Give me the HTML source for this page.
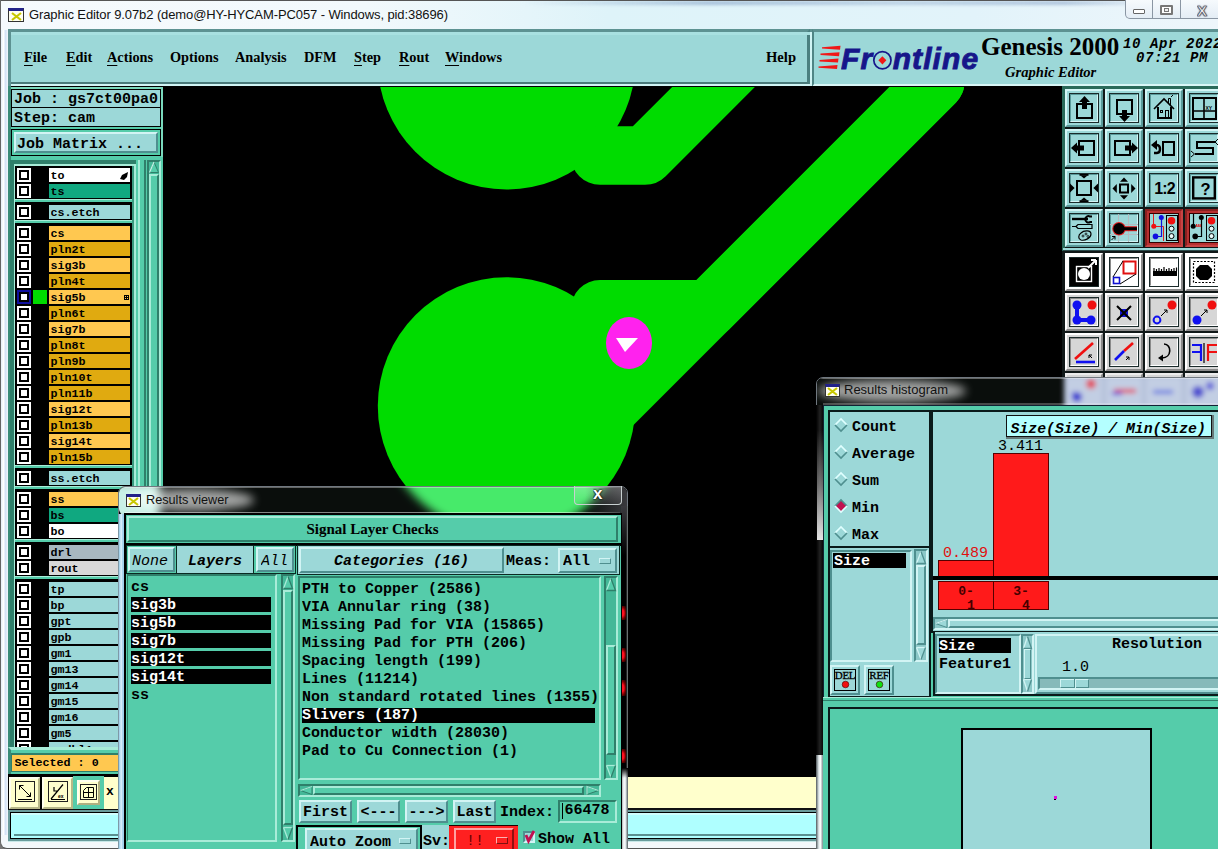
<!DOCTYPE html><html><head><meta charset="utf-8"><title>Graphic Editor</title><style>
html,body{margin:0;padding:0;}
body{width:1218px;height:849px;overflow:hidden;background:#eef4fa;position:relative;font-family:"Liberation Mono",monospace;}
div{position:absolute;box-sizing:border-box;white-space:pre;overflow:hidden;}
svg{position:absolute;overflow:visible;}
.m{font-family:"Liberation Mono",monospace;font-weight:bold;color:#000;}
.s{font-family:"Liberation Serif",serif;font-weight:bold;color:#000;}
.u{text-decoration:underline;text-underline-offset:3px;text-decoration-thickness:1.5px;}
.rc{border-style:solid;border-width:2px;border-color:#d2f4f4 #4f8f8f #4f8f8f #d2f4f4;background:#9cd8d8;}
.sc{border-style:solid;border-width:2px;border-color:#4f8f8f #d2f4f4 #d2f4f4 #4f8f8f;background:#9cd8d8;}
.rt{border-style:solid;border-width:2px;border-color:#a8ecd8 #2f7f6a #2f7f6a #a8ecd8;background:#55ccaa;}
.st{border-style:solid;border-width:2px;border-color:#2f7f6a #a8ecd8 #a8ecd8 #2f7f6a;background:#55ccaa;}
</style></head><body>
<div style="left:0px;top:0px;width:1218px;height:849px;background:#f2f7fb;"></div>
<div style="left:0px;top:0px;width:1218px;height:30px;background:linear-gradient(90deg,#f6fafd 0%,#f2f9fc 30%,#def3f9 50%,#e2f3fa 80%,#eef6fb 100%);"></div>
<div style="left:520px;top:1px;width:640px;height:4px;background:linear-gradient(90deg,rgba(120,150,190,0),rgba(120,150,190,.55) 30%,rgba(120,150,190,.35) 60%,rgba(120,150,190,.5) 85%,rgba(120,150,190,0));filter:blur(1.5px);"></div>
<div style="left:0px;top:0px;width:1218px;height:1px;background:#555;"></div>
<div style="left:1px;top:30px;width:7px;height:806px;background:linear-gradient(90deg,#e4eef8,#ffffff 35%,#d4e2f6 65%,#f2f7fc);"></div>
<div style="left:0px;top:0px;width:1px;height:849px;background:#666;"></div>
<div style="left:0px;top:839px;width:10px;height:10px;background:#777;"></div>
<div style="left:0px;top:835px;width:1218px;height:14px;background:#f4f8fb;border-bottom:1px solid #555;border-left:1px solid #666;border-radius:0 0 0 7px;"></div>
<div style="left:8px;top:8px;width:16px;height:14px;background:#fffff0;border:1px solid #333;border-top:3px solid #22228a;"></div>
<svg style="left:10.5px;top:11.5px" width="11" height="9"><path d="M1 1 L10 8 M10 1 L1 8" stroke="#c8c800" stroke-width="2.2" fill="none"/></svg>
<div style="left:29px;top:6px;width:600px;height:18px;font-family:'Liberation Sans',sans-serif;font-size:13px;color:#111;line-height:18px;letter-spacing:-0.1px;">Graphic Editor 9.07b2 (demo@HY-HYCAM-PC057 - Windows, pid:38696)</div>
<div style="left:1125px;top:0px;width:100px;height:19px;border:1px solid #8a96a3;border-top:none;border-radius:0 0 0 5px;background:linear-gradient(#f6fafd,#e4edf5);"></div>
<div style="left:1152px;top:0px;width:1px;height:18px;background:#8a96a3;"></div>
<div style="left:1180px;top:0px;width:1px;height:18px;background:#8a96a3;"></div>
<div style="left:1133px;top:9px;width:12px;height:5px;border:1px solid #666;background:#fff;border-radius:1px;"></div>
<div style="left:1160px;top:5px;width:13px;height:10px;border:2px solid #777;background:#fff;border-radius:1px;"></div>
<div style="left:1164px;top:8px;width:5px;height:4px;border:1px solid #777;background:#eee;"></div>
<div style="left:1197px;top:3px;width:20px;height:16px;font-family:'Liberation Sans',sans-serif;font-weight:bold;font-size:15px;color:#f4f4f4;-webkit-text-stroke:0.6px #556;text-shadow:0 0 1px #334,0 0 2px #334;line-height:16px;">X</div>
<div style="left:8px;top:29px;width:802px;height:55px;background:#9cd8d8;border-style:solid;border-width:3px 3px 2px 3px;border-color:#5d9292 #4a8080 #4a7a7a #5d9292;"></div>
<div style="left:8px;top:84px;width:806px;height:2px;background:#d0f4f4;"></div>
<div style="left:8px;top:29px;width:3px;height:57px;background:#5d9292;"></div>
<div style="left:11px;top:32px;width:800px;height:3px;background:#a8e0e0;"></div>
<div class="s" style="left:24px;top:48px;width:90px;height:18px;font-size:14.3px;line-height:18px;"><span class="u">F</span>ile</div>
<div class="s" style="left:66px;top:48px;width:90px;height:18px;font-size:14.3px;line-height:18px;"><span class="u">E</span>dit</div>
<div class="s" style="left:107px;top:48px;width:90px;height:18px;font-size:14.3px;line-height:18px;"><span class="u">A</span>ctions</div>
<div class="s" style="left:170px;top:48px;width:90px;height:18px;font-size:14.3px;line-height:18px;">Options</div>
<div class="s" style="left:235px;top:48px;width:90px;height:18px;font-size:14.3px;line-height:18px;">Analysis</div>
<div class="s" style="left:304px;top:48px;width:90px;height:18px;font-size:14.3px;line-height:18px;">DFM</div>
<div class="s" style="left:354px;top:48px;width:90px;height:18px;font-size:14.3px;line-height:18px;"><span class="u">S</span>tep</div>
<div class="s" style="left:399px;top:48px;width:90px;height:18px;font-size:14.3px;line-height:18px;"><span class="u">R</span>out</div>
<div class="s" style="left:445px;top:48px;width:90px;height:18px;font-size:14.3px;line-height:18px;"><span class="u">W</span>indows</div>
<div class="s" style="left:766px;top:48px;width:40px;height:18px;font-size:14.6px;line-height:18px;">Help</div>
<div style="left:810px;top:29px;width:3px;height:57px;background:#d0f4f4;border-top:3px solid #5d9292;"></div>
<div style="left:812px;top:29px;width:410px;height:58px;background:#9cd8d8;border-style:solid;border-width:3px 3px 3px 2px;border-color:#5d9292 #4a8080 #d8f6f6 #4f8585;"></div>
<svg style="left:818px;top:45px" width="24" height="24"><g fill="#f01818"><polygon points="4,2.2 22.5,0.8 22,4.8 4,3.6"/><polygon points="2.5,8.6 21.5,7.2 21,11.2 2.5,10"/><polygon points="1.5,15 20.5,13.6 20,17.6 1.5,16.4"/><polygon points="0.5,21.4 19.5,20 19,24 0.5,22.8"/></g></svg>
<div style="left:841px;top:40.5px;width:150px;height:36px;font-family:'Liberation Sans',sans-serif;font-weight:bold;font-style:italic;font-size:30px;line-height:36px;color:#16168a;letter-spacing:1.1px;-webkit-text-stroke:0.9px #16168a;">Fr<span style='color:transparent;-webkit-text-stroke:0 transparent'>o</span>ntline</div>
<svg style="left:871.5px;top:50px" width="21" height="21"><circle cx="10.4" cy="10.3" r="8.6" fill="none" stroke="#16168a" stroke-width="1.7"/><polygon points="10.4,6.2 14.4,10.3 10.4,14.4 6.4,10.3" fill="#f01818"/></svg>
<div class="s" style="left:981px;top:31.5px;width:140px;height:30px;font-size:25px;line-height:30px;">Genesis 2000</div>
<div class="s" style="left:1005px;top:63.2px;width:110px;height:18px;font-size:14.6px;font-style:italic;line-height:18px;">Graphic Editor</div>
<div class="m" style="left:1123px;top:35.5px;width:100px;height:16px;font-size:14px;font-style:italic;line-height:16px;letter-spacing:0.6px;">10 Apr 2022</div>
<div class="m" style="left:1136px;top:50px;width:100px;height:16px;font-size:14px;font-style:italic;line-height:16px;letter-spacing:0.6px;">07:21 PM</div>
<div style="left:163px;top:86px;width:900px;height:691px;background:#000;"></div>
<svg style="left:0;top:0" width="1218" height="849" viewBox="0 0 1218 849"><defs><clipPath id="gc"><rect x="163" y="87" width="899" height="690"/></clipPath></defs>
<g clip-path="url(#gc)" fill="#00dc00" stroke="#00dc00">
<circle cx="506.5" cy="60.5" r="129" stroke="none"/>
<circle cx="506.5" cy="406" r="128.7" stroke="none"/>
<polyline points="600,155.5 645,155.5 760,40.5" fill="none" stroke-width="58.5" stroke-linecap="round" stroke-linejoin="round"/>
<polyline points="600,309 708.5,309 935.5,82" fill="none" stroke-width="58" stroke-linecap="round" stroke-linejoin="round"/>
<polyline points="558.75,458.75 935.5,82" fill="none" stroke-width="58" stroke-linecap="round"/>
<ellipse cx="629" cy="343" rx="23" ry="26" fill="#ff22ee" stroke="none"/>
<polygon points="616,338 638,338 625,352" fill="#fff" stroke="none"/>
</g></svg>
<div style="left:117px;top:777px;width:1100px;height:31px;background:#ffffcc;"></div>
<div style="left:8px;top:808px;width:1215px;height:2px;background:#111;"></div>
<div style="left:8px;top:810px;width:1215px;height:32px;background:#6a9c9c;border-bottom:1px solid #c8e8e8;"></div>
<div style="left:10px;top:812px;width:1215px;height:27px;background:#afffff;border:1px solid #000;"></div>
<div style="left:11px;top:813px;width:1215px;height:2px;background:#d0ffff;"></div>
<div style="left:14px;top:834px;width:1215px;height:2px;background:#5a9090;"></div>
<div style="left:8px;top:86px;width:155px;height:692px;background:#55ccaa;border-top:1px solid #000;"></div>
<div style="left:11px;top:87px;width:152px;height:2px;background:#7ad8bc;"></div>
<div style="left:161px;top:87px;width:2px;height:70px;background:#7ad8bc;"></div>
<div style="left:8px;top:86px;width:3px;height:692px;background:#3a8c78;"></div>
<div style="left:11px;top:89px;width:150px;height:19px;background:#9cd8d8;border:1px solid #000;"></div>
<div class="m" style="left:14px;top:92px;width:150px;height:16px;font-size:15px;line-height:16px;">Job : gs7ct00pa0</div>
<div style="left:11px;top:107px;width:150px;height:20px;background:#9cd8d8;border:1px solid #000;"></div>
<div class="m" style="left:14px;top:111px;width:150px;height:16px;font-size:15px;line-height:16px;">Step: cam</div>
<div style="left:11px;top:129px;width:150px;height:27px;background:#55ccaa;border:1px solid #000;"></div>
<div class="rc" style="left:14px;top:132px;width:144px;height:21px;"></div>
<div class="m" style="left:17px;top:135.5px;width:140px;height:17px;font-size:15px;line-height:17px;">Job Matrix ...</div>
<div style="left:10px;top:160px;width:126px;height:590px;background:#2f7f6a;"></div>
<div style="left:14px;top:164px;width:122px;height:590px;background:#a8ecd8;"></div>
<div style="left:15px;top:166px;width:119px;height:590px;background:#3a9a80;"></div>
<div style="left:15px;top:166px;width:117px;height:590px;background:#000;"></div>
<div style="left:138px;top:160px;width:8px;height:590px;background:#55ccaa;border-left:2px solid #a8ecd8;border-right:2px solid #2f7f6a;"></div>
<div style="left:147px;top:160px;width:14px;height:590px;background:#44b898;border-style:solid;border-width:2px;border-color:#2f7f6a #a8ecd8 #a8ecd8 #2f7f6a;"></div>
<svg style="left:149px;top:161px" width="10" height="13"><polygon points="5,1 9.5,11.5 0.5,11.5" fill="#55ccaa" stroke="#2f7f6a" stroke-width="1"/><path d="M5 1 L0.5 11.5" stroke="#c8f4e8" stroke-width="1.2"/></svg>
<div style="left:149px;top:174px;width:10px;height:573px;background:#55ccaa;border-style:solid;border-width:2px;border-color:#a8ecd8 #2f7f6a #2f7f6a #a8ecd8;"></div>
<div style="left:17px;top:168px;width:14px;height:14px;background:#fff;"></div>
<div style="left:19px;top:170px;width:10px;height:10px;background:#fff;border:2px solid #000;"></div>
<div style="left:49px;top:168px;width:81px;height:14px;background:#ffffff;"></div>
<div class="m" style="left:50.5px;top:167.5px;width:80px;height:16px;font-size:11.7px;line-height:16px;letter-spacing:0px;">to</div>
<svg style="left:119px;top:171px" width="10" height="10"><path d="M9 1 L3 4 L1 8 L5 9 L8 6 Z" fill="#000"/></svg>
<div style="left:17px;top:184px;width:14px;height:14px;background:#fff;"></div>
<div style="left:19px;top:186px;width:10px;height:10px;background:#fff;border:2px solid #000;"></div>
<div style="left:49px;top:184px;width:81px;height:14px;background:#10a880;"></div>
<div class="m" style="left:50.5px;top:183.5px;width:80px;height:16px;font-size:11.7px;line-height:16px;letter-spacing:0px;">ts</div>
<div style="left:15px;top:199px;width:117px;height:3px;background:#55ccaa;border-top:1px solid #a8ecd8;"></div>
<div style="left:17px;top:205px;width:14px;height:14px;background:#fff;"></div>
<div style="left:19px;top:207px;width:10px;height:10px;background:#fff;border:2px solid #000;"></div>
<div style="left:49px;top:205px;width:81px;height:14px;background:#9cd8d8;"></div>
<div class="m" style="left:50.5px;top:204.5px;width:80px;height:16px;font-size:11.7px;line-height:16px;letter-spacing:0px;">cs.etch</div>
<div style="left:15px;top:220px;width:117px;height:3px;background:#55ccaa;border-top:1px solid #a8ecd8;"></div>
<div style="left:17px;top:226px;width:14px;height:14px;background:#fff;"></div>
<div style="left:19px;top:228px;width:10px;height:10px;background:#fff;border:2px solid #000;"></div>
<div style="left:49px;top:226px;width:81px;height:14px;background:#ffc850;"></div>
<div class="m" style="left:50.5px;top:225.5px;width:80px;height:16px;font-size:11.7px;line-height:16px;letter-spacing:0px;">cs</div>
<div style="left:17px;top:242px;width:14px;height:14px;background:#fff;"></div>
<div style="left:19px;top:244px;width:10px;height:10px;background:#fff;border:2px solid #000;"></div>
<div style="left:49px;top:242px;width:81px;height:14px;background:#e0aa10;"></div>
<div class="m" style="left:50.5px;top:241.5px;width:80px;height:16px;font-size:11.7px;line-height:16px;letter-spacing:0px;">pln2t</div>
<div style="left:17px;top:258px;width:14px;height:14px;background:#fff;"></div>
<div style="left:19px;top:260px;width:10px;height:10px;background:#fff;border:2px solid #000;"></div>
<div style="left:49px;top:258px;width:81px;height:14px;background:#ffc850;"></div>
<div class="m" style="left:50.5px;top:257.5px;width:80px;height:16px;font-size:11.7px;line-height:16px;letter-spacing:0px;">sig3b</div>
<div style="left:17px;top:274px;width:14px;height:14px;background:#fff;"></div>
<div style="left:19px;top:276px;width:10px;height:10px;background:#fff;border:2px solid #000;"></div>
<div style="left:49px;top:274px;width:81px;height:14px;background:#e0aa10;"></div>
<div class="m" style="left:50.5px;top:273.5px;width:80px;height:16px;font-size:11.7px;line-height:16px;letter-spacing:0px;">pln4t</div>
<div style="left:17px;top:290px;width:14px;height:14px;background:#1010a0;"></div>
<div style="left:19px;top:292px;width:10px;height:10px;background:#fff;border:2px solid #000;"></div>
<div style="left:33px;top:290px;width:14px;height:14px;background:#00dc00;"></div>
<div style="left:49px;top:290px;width:81px;height:14px;background:#ffc850;"></div>
<div class="m" style="left:50.5px;top:289.5px;width:80px;height:16px;font-size:11.7px;line-height:16px;letter-spacing:0px;">sig5b</div>
<svg style="left:124px;top:295px" width="6" height="6"><rect x="0.5" y="0.5" width="4" height="4" fill="none" stroke="#000"/><path d="M2.5 0.5V4.5M0.5 2.5H4.5" stroke="#000"/></svg>
<div style="left:17px;top:306px;width:14px;height:14px;background:#fff;"></div>
<div style="left:19px;top:308px;width:10px;height:10px;background:#fff;border:2px solid #000;"></div>
<div style="left:49px;top:306px;width:81px;height:14px;background:#e0aa10;"></div>
<div class="m" style="left:50.5px;top:305.5px;width:80px;height:16px;font-size:11.7px;line-height:16px;letter-spacing:0px;">pln6t</div>
<div style="left:17px;top:322px;width:14px;height:14px;background:#fff;"></div>
<div style="left:19px;top:324px;width:10px;height:10px;background:#fff;border:2px solid #000;"></div>
<div style="left:49px;top:322px;width:81px;height:14px;background:#ffc850;"></div>
<div class="m" style="left:50.5px;top:321.5px;width:80px;height:16px;font-size:11.7px;line-height:16px;letter-spacing:0px;">sig7b</div>
<div style="left:17px;top:338px;width:14px;height:14px;background:#fff;"></div>
<div style="left:19px;top:340px;width:10px;height:10px;background:#fff;border:2px solid #000;"></div>
<div style="left:49px;top:338px;width:81px;height:14px;background:#e0aa10;"></div>
<div class="m" style="left:50.5px;top:337.5px;width:80px;height:16px;font-size:11.7px;line-height:16px;letter-spacing:0px;">pln8t</div>
<div style="left:17px;top:354px;width:14px;height:14px;background:#fff;"></div>
<div style="left:19px;top:356px;width:10px;height:10px;background:#fff;border:2px solid #000;"></div>
<div style="left:49px;top:354px;width:81px;height:14px;background:#e0aa10;"></div>
<div class="m" style="left:50.5px;top:353.5px;width:80px;height:16px;font-size:11.7px;line-height:16px;letter-spacing:0px;">pln9b</div>
<div style="left:17px;top:370px;width:14px;height:14px;background:#fff;"></div>
<div style="left:19px;top:372px;width:10px;height:10px;background:#fff;border:2px solid #000;"></div>
<div style="left:49px;top:370px;width:81px;height:14px;background:#e0aa10;"></div>
<div class="m" style="left:50.5px;top:369.5px;width:80px;height:16px;font-size:11.7px;line-height:16px;letter-spacing:0px;">pln10t</div>
<div style="left:17px;top:386px;width:14px;height:14px;background:#fff;"></div>
<div style="left:19px;top:388px;width:10px;height:10px;background:#fff;border:2px solid #000;"></div>
<div style="left:49px;top:386px;width:81px;height:14px;background:#e0aa10;"></div>
<div class="m" style="left:50.5px;top:385.5px;width:80px;height:16px;font-size:11.7px;line-height:16px;letter-spacing:0px;">pln11b</div>
<div style="left:17px;top:402px;width:14px;height:14px;background:#fff;"></div>
<div style="left:19px;top:404px;width:10px;height:10px;background:#fff;border:2px solid #000;"></div>
<div style="left:49px;top:402px;width:81px;height:14px;background:#ffc850;"></div>
<div class="m" style="left:50.5px;top:401.5px;width:80px;height:16px;font-size:11.7px;line-height:16px;letter-spacing:0px;">sig12t</div>
<div style="left:17px;top:418px;width:14px;height:14px;background:#fff;"></div>
<div style="left:19px;top:420px;width:10px;height:10px;background:#fff;border:2px solid #000;"></div>
<div style="left:49px;top:418px;width:81px;height:14px;background:#e0aa10;"></div>
<div class="m" style="left:50.5px;top:417.5px;width:80px;height:16px;font-size:11.7px;line-height:16px;letter-spacing:0px;">pln13b</div>
<div style="left:17px;top:434px;width:14px;height:14px;background:#fff;"></div>
<div style="left:19px;top:436px;width:10px;height:10px;background:#fff;border:2px solid #000;"></div>
<div style="left:49px;top:434px;width:81px;height:14px;background:#ffc850;"></div>
<div class="m" style="left:50.5px;top:433.5px;width:80px;height:16px;font-size:11.7px;line-height:16px;letter-spacing:0px;">sig14t</div>
<div style="left:17px;top:450px;width:14px;height:14px;background:#fff;"></div>
<div style="left:19px;top:452px;width:10px;height:10px;background:#fff;border:2px solid #000;"></div>
<div style="left:49px;top:450px;width:81px;height:14px;background:#e0aa10;"></div>
<div class="m" style="left:50.5px;top:449.5px;width:80px;height:16px;font-size:11.7px;line-height:16px;letter-spacing:0px;">pln15b</div>
<div style="left:15px;top:465px;width:117px;height:3px;background:#55ccaa;border-top:1px solid #a8ecd8;"></div>
<div style="left:17px;top:471px;width:14px;height:14px;background:#fff;"></div>
<div style="left:19px;top:473px;width:10px;height:10px;background:#fff;border:2px solid #000;"></div>
<div style="left:49px;top:471px;width:81px;height:14px;background:#9cd8d8;"></div>
<div class="m" style="left:50.5px;top:470.5px;width:80px;height:16px;font-size:11.7px;line-height:16px;letter-spacing:0px;">ss.etch</div>
<div style="left:15px;top:486px;width:117px;height:3px;background:#55ccaa;border-top:1px solid #a8ecd8;"></div>
<div style="left:17px;top:492px;width:14px;height:14px;background:#fff;"></div>
<div style="left:19px;top:494px;width:10px;height:10px;background:#fff;border:2px solid #000;"></div>
<div style="left:49px;top:492px;width:81px;height:14px;background:#ffc850;"></div>
<div class="m" style="left:50.5px;top:491.5px;width:80px;height:16px;font-size:11.7px;line-height:16px;letter-spacing:0px;">ss</div>
<div style="left:17px;top:508px;width:14px;height:14px;background:#fff;"></div>
<div style="left:19px;top:510px;width:10px;height:10px;background:#fff;border:2px solid #000;"></div>
<div style="left:49px;top:508px;width:81px;height:14px;background:#10a880;"></div>
<div class="m" style="left:50.5px;top:507.5px;width:80px;height:16px;font-size:11.7px;line-height:16px;letter-spacing:0px;">bs</div>
<div style="left:17px;top:524px;width:14px;height:14px;background:#fff;"></div>
<div style="left:19px;top:526px;width:10px;height:10px;background:#fff;border:2px solid #000;"></div>
<div style="left:49px;top:524px;width:81px;height:14px;background:#ffffff;"></div>
<div class="m" style="left:50.5px;top:523.5px;width:80px;height:16px;font-size:11.7px;line-height:16px;letter-spacing:0px;">bo</div>
<div style="left:15px;top:539px;width:117px;height:3px;background:#55ccaa;border-top:1px solid #a8ecd8;"></div>
<div style="left:17px;top:545px;width:14px;height:14px;background:#fff;"></div>
<div style="left:19px;top:547px;width:10px;height:10px;background:#fff;border:2px solid #000;"></div>
<div style="left:49px;top:545px;width:81px;height:14px;background:#a8b8c0;"></div>
<div class="m" style="left:50.5px;top:544.5px;width:80px;height:16px;font-size:11.7px;line-height:16px;letter-spacing:0px;">drl</div>
<div style="left:17px;top:561px;width:14px;height:14px;background:#fff;"></div>
<div style="left:19px;top:563px;width:10px;height:10px;background:#fff;border:2px solid #000;"></div>
<div style="left:49px;top:561px;width:81px;height:14px;background:#d8d8d8;"></div>
<div class="m" style="left:50.5px;top:560.5px;width:80px;height:16px;font-size:11.7px;line-height:16px;letter-spacing:0px;">rout</div>
<div style="left:15px;top:576px;width:117px;height:3px;background:#55ccaa;border-top:1px solid #a8ecd8;"></div>
<div style="left:17px;top:582px;width:14px;height:14px;background:#fff;"></div>
<div style="left:19px;top:584px;width:10px;height:10px;background:#fff;border:2px solid #000;"></div>
<div style="left:49px;top:582px;width:81px;height:14px;background:#9cd8d8;"></div>
<div class="m" style="left:50.5px;top:581.5px;width:80px;height:16px;font-size:11.7px;line-height:16px;letter-spacing:0px;">tp</div>
<div style="left:17px;top:598px;width:14px;height:14px;background:#fff;"></div>
<div style="left:19px;top:600px;width:10px;height:10px;background:#fff;border:2px solid #000;"></div>
<div style="left:49px;top:598px;width:81px;height:14px;background:#9cd8d8;"></div>
<div class="m" style="left:50.5px;top:597.5px;width:80px;height:16px;font-size:11.7px;line-height:16px;letter-spacing:0px;">bp</div>
<div style="left:17px;top:614px;width:14px;height:14px;background:#fff;"></div>
<div style="left:19px;top:616px;width:10px;height:10px;background:#fff;border:2px solid #000;"></div>
<div style="left:49px;top:614px;width:81px;height:14px;background:#9cd8d8;"></div>
<div class="m" style="left:50.5px;top:613.5px;width:80px;height:16px;font-size:11.7px;line-height:16px;letter-spacing:0px;">gpt</div>
<div style="left:17px;top:630px;width:14px;height:14px;background:#fff;"></div>
<div style="left:19px;top:632px;width:10px;height:10px;background:#fff;border:2px solid #000;"></div>
<div style="left:49px;top:630px;width:81px;height:14px;background:#9cd8d8;"></div>
<div class="m" style="left:50.5px;top:629.5px;width:80px;height:16px;font-size:11.7px;line-height:16px;letter-spacing:0px;">gpb</div>
<div style="left:17px;top:646px;width:14px;height:14px;background:#fff;"></div>
<div style="left:19px;top:648px;width:10px;height:10px;background:#fff;border:2px solid #000;"></div>
<div style="left:49px;top:646px;width:81px;height:14px;background:#9cd8d8;"></div>
<div class="m" style="left:50.5px;top:645.5px;width:80px;height:16px;font-size:11.7px;line-height:16px;letter-spacing:0px;">gm1</div>
<div style="left:17px;top:662px;width:14px;height:14px;background:#fff;"></div>
<div style="left:19px;top:664px;width:10px;height:10px;background:#fff;border:2px solid #000;"></div>
<div style="left:49px;top:662px;width:81px;height:14px;background:#9cd8d8;"></div>
<div class="m" style="left:50.5px;top:661.5px;width:80px;height:16px;font-size:11.7px;line-height:16px;letter-spacing:0px;">gm13</div>
<div style="left:17px;top:678px;width:14px;height:14px;background:#fff;"></div>
<div style="left:19px;top:680px;width:10px;height:10px;background:#fff;border:2px solid #000;"></div>
<div style="left:49px;top:678px;width:81px;height:14px;background:#9cd8d8;"></div>
<div class="m" style="left:50.5px;top:677.5px;width:80px;height:16px;font-size:11.7px;line-height:16px;letter-spacing:0px;">gm14</div>
<div style="left:17px;top:694px;width:14px;height:14px;background:#fff;"></div>
<div style="left:19px;top:696px;width:10px;height:10px;background:#fff;border:2px solid #000;"></div>
<div style="left:49px;top:694px;width:81px;height:14px;background:#9cd8d8;"></div>
<div class="m" style="left:50.5px;top:693.5px;width:80px;height:16px;font-size:11.7px;line-height:16px;letter-spacing:0px;">gm15</div>
<div style="left:17px;top:710px;width:14px;height:14px;background:#fff;"></div>
<div style="left:19px;top:712px;width:10px;height:10px;background:#fff;border:2px solid #000;"></div>
<div style="left:49px;top:710px;width:81px;height:14px;background:#9cd8d8;"></div>
<div class="m" style="left:50.5px;top:709.5px;width:80px;height:16px;font-size:11.7px;line-height:16px;letter-spacing:0px;">gm16</div>
<div style="left:17px;top:726px;width:14px;height:14px;background:#fff;"></div>
<div style="left:19px;top:728px;width:10px;height:10px;background:#fff;border:2px solid #000;"></div>
<div style="left:49px;top:726px;width:81px;height:14px;background:#9cd8d8;"></div>
<div class="m" style="left:50.5px;top:725.5px;width:80px;height:16px;font-size:11.7px;line-height:16px;letter-spacing:0px;">gm5</div>
<div style="left:17px;top:742px;width:14px;height:14px;background:#fff;"></div>
<div style="left:19px;top:744px;width:10px;height:10px;background:#fff;border:2px solid #000;"></div>
<div style="left:49px;top:742px;width:81px;height:14px;background:#9cd8d8;"></div>
<div class="m" style="left:50.5px;top:741.5px;width:80px;height:16px;font-size:11.7px;line-height:16px;letter-spacing:0px;">gmdbl1</div>
<div style="left:8px;top:747px;width:110px;height:28px;background:#55ccaa;border-top:3px solid #a8ecd8;border-left:3px solid #3a8c78;"></div>
<div style="left:11px;top:753px;width:110px;height:19px;background:#ffc850;border:1px solid #2f7f6a;border-top:2px solid #2f7f6a;"></div>
<div class="m" style="left:14.5px;top:756px;width:110px;height:15px;font-size:11.7px;line-height:15px;">Selected : 0</div>
<div style="left:8px;top:774px;width:110px;height:35px;background:#000;"></div>
<div style="left:73px;top:776px;width:31px;height:33px;background:#55ccaa;"></div>
<div style="left:9px;top:777px;width:31px;height:32px;background:#ffffcc;border-style:solid;border-width:2px;border-color:#ffffee #b8b888 #b8b888 #ffffee;"></div>
<div style="left:15px;top:781px;width:20px;height:21px;background:#ffffcc;border:1px solid #222;"></div>
<div style="left:42px;top:777px;width:31px;height:32px;background:#ffffcc;border-style:solid;border-width:2px;border-color:#ffffee #b8b888 #b8b888 #ffffee;"></div>
<div style="left:48px;top:781px;width:20px;height:21px;background:#ffffcc;border:1px solid #222;"></div>
<div style="left:74px;top:777px;width:29px;height:32px;background:#55ccaa;"></div>
<div style="left:77px;top:780px;width:23px;height:25px;background:#ffffcc;border-style:solid;border-width:2px;border-color:#ffffee #b0b080 #b0b080 #ffffee;"></div>
<div style="left:80px;top:784px;width:17px;height:16px;background:#ffffcc;border:1px solid #222;"></div>
<div style="left:104px;top:777px;width:14px;height:32px;background:#ffffcc;"></div>
<div class="m" style="left:106px;top:783px;width:12px;height:18px;font-size:13px;line-height:18px;">x</div>
<svg style="left:15px;top:781px" width="20" height="21"><path d="M4.5 4.5 L15.5 15.5 M4.5 4.5 v4 M4.5 4.5 h4 M15.5 15.5 h-4 M15.5 15.5 v-4" stroke="#000" fill="none"/><path d="M3 18.5 H17" stroke="#000"/></svg>
<svg style="left:48px;top:781px" width="20" height="21"><path d="M3 18 L15 3.5 M3 18.5 H17 M6 6 v4 h3" stroke="#000" fill="none" stroke-width="1.2"/><text x="10" y="17" font-size="5" font-family="Liberation Sans,sans-serif" font-weight="bold">ex</text></svg>
<svg style="left:80px;top:784px" width="18" height="18"><path d="M3.5 6.5 L6.5 3.5 H13.5 V13.5 H3.5 Z M8.5 3.5 V13.5 M3.5 8.5 H13.5" fill="none" stroke="#000"/></svg>
<div style="left:1062px;top:86px;width:160px;height:292px;background:#101818;"></div>
<div style="left:1062px;top:86px;width:160px;height:3px;background:#2a6a5a;"></div>
<div style="left:1062px;top:86px;width:3px;height:165px;background:#2a6a5a;"></div>
<div style="left:1063px;top:248px;width:160px;height:3px;background:#9cd8d8;border-bottom:1px solid #2a4a4a;"></div>
<div style="left:1065px;top:89px;width:38px;height:38px;background:#9cd8d8;border-style:solid;border-width:2px;border-color:#d4f6f6 #5a9a9a #5a9a9a #d4f6f6;"></div>
<div style="left:1069px;top:93px;width:30px;height:30px;background:#9cd8d8;border-style:solid;border-width:1px;border-color:#1a2a2a #1a2a2a #1a2a2a #1a2a2a;"></div>
<div style="left:1070px;top:94px;width:28px;height:28px;background:#9cd8d8;border-style:solid;border-width:1px;border-color:#5a9a9a #d4f6f6 #d4f6f6 #5a9a9a;"></div>
<svg style="left:1070px;top:94px" width="28" height="28" viewBox="0 0 28 28"><rect x="7" y="10" width="15" height="14" stroke="#000" fill="none" stroke-width="2"/><path d="M14.5 15 V7" stroke="#000" stroke-width="5"/><polygon points="14.5,2 20,8 9,8" fill="#000"/></svg>
<div style="left:1105px;top:89px;width:38px;height:38px;background:#9cd8d8;border-style:solid;border-width:2px;border-color:#d4f6f6 #5a9a9a #5a9a9a #d4f6f6;"></div>
<div style="left:1109px;top:93px;width:30px;height:30px;background:#9cd8d8;border-style:solid;border-width:1px;border-color:#1a2a2a #1a2a2a #1a2a2a #1a2a2a;"></div>
<div style="left:1110px;top:94px;width:28px;height:28px;background:#9cd8d8;border-style:solid;border-width:1px;border-color:#5a9a9a #d4f6f6 #d4f6f6 #5a9a9a;"></div>
<svg style="left:1110px;top:94px" width="28" height="28" viewBox="0 0 28 28"><rect x="7" y="6" width="15" height="14" stroke="#000" fill="none" stroke-width="2"/><path d="M14.5 16 V24" stroke="#000" stroke-width="5"/><polygon points="14.5,28 20,22 9,22" fill="#000"/></svg>
<div style="left:1145px;top:89px;width:38px;height:38px;background:#9cd8d8;border-style:solid;border-width:2px;border-color:#d4f6f6 #5a9a9a #5a9a9a #d4f6f6;"></div>
<div style="left:1149px;top:93px;width:30px;height:30px;background:#9cd8d8;border-style:solid;border-width:1px;border-color:#1a2a2a #1a2a2a #1a2a2a #1a2a2a;"></div>
<div style="left:1150px;top:94px;width:28px;height:28px;background:#9cd8d8;border-style:solid;border-width:1px;border-color:#5a9a9a #d4f6f6 #d4f6f6 #5a9a9a;"></div>
<svg style="left:1150px;top:94px" width="28" height="28" viewBox="0 0 28 28"><path d="M4 15 L14 5 L24 15" stroke="#000" fill="none" stroke-width="1.6" shape-rendering="auto"/><path d="M8 13 V24 H21 V13" stroke="#000" fill="none" stroke-width="2"/><path d="M18.5 9 V4.5 h2 v6.5 M21 3 l2 -2" stroke="#000" fill="none" stroke-width="1"/><rect x="10.5" y="16.5" width="2" height="2" stroke="#000" fill="none"/><rect x="15.5" y="16.5" width="3" height="7" stroke="#000" fill="none"/></svg>
<div style="left:1185px;top:89px;width:38px;height:38px;background:#9cd8d8;border-style:solid;border-width:2px;border-color:#d4f6f6 #5a9a9a #5a9a9a #d4f6f6;"></div>
<div style="left:1189px;top:93px;width:30px;height:30px;background:#9cd8d8;border-style:solid;border-width:1px;border-color:#1a2a2a #1a2a2a #1a2a2a #1a2a2a;"></div>
<div style="left:1190px;top:94px;width:28px;height:28px;background:#9cd8d8;border-style:solid;border-width:1px;border-color:#5a9a9a #d4f6f6 #d4f6f6 #5a9a9a;"></div>
<svg style="left:1190px;top:94px" width="28" height="28" viewBox="0 0 28 28"><rect x="3" y="4" width="23" height="21" stroke="#000" fill="none" stroke-width="2"/><path d="M14 4 V25 M3 17 H26" stroke="#000" fill="none" stroke-width="1.6"/><text x="15.5" y="16" font-size="5" font-family="Liberation Sans,sans-serif" font-weight="bold">XY</text></svg>
<div style="left:1065px;top:129px;width:38px;height:38px;background:#9cd8d8;border-style:solid;border-width:2px;border-color:#d4f6f6 #5a9a9a #5a9a9a #d4f6f6;"></div>
<div style="left:1069px;top:133px;width:30px;height:30px;background:#9cd8d8;border-style:solid;border-width:1px;border-color:#1a2a2a #1a2a2a #1a2a2a #1a2a2a;"></div>
<div style="left:1070px;top:134px;width:28px;height:28px;background:#9cd8d8;border-style:solid;border-width:1px;border-color:#5a9a9a #d4f6f6 #d4f6f6 #5a9a9a;"></div>
<svg style="left:1070px;top:134px" width="28" height="28" viewBox="0 0 28 28"><rect x="9" y="7" width="15" height="14" stroke="#000" fill="none" stroke-width="2"/><path d="M14 14 H6" stroke="#000" stroke-width="5"/><polygon points="1,14 7,8.5 7,19.5" fill="#000"/></svg>
<div style="left:1105px;top:129px;width:38px;height:38px;background:#9cd8d8;border-style:solid;border-width:2px;border-color:#d4f6f6 #5a9a9a #5a9a9a #d4f6f6;"></div>
<div style="left:1109px;top:133px;width:30px;height:30px;background:#9cd8d8;border-style:solid;border-width:1px;border-color:#1a2a2a #1a2a2a #1a2a2a #1a2a2a;"></div>
<div style="left:1110px;top:134px;width:28px;height:28px;background:#9cd8d8;border-style:solid;border-width:1px;border-color:#5a9a9a #d4f6f6 #d4f6f6 #5a9a9a;"></div>
<svg style="left:1110px;top:134px" width="28" height="28" viewBox="0 0 28 28"><rect x="5" y="7" width="15" height="14" stroke="#000" fill="none" stroke-width="2"/><path d="M15 14 H23" stroke="#000" stroke-width="5"/><polygon points="28,14 22,8.5 22,19.5" fill="#000"/></svg>
<div style="left:1145px;top:129px;width:38px;height:38px;background:#9cd8d8;border-style:solid;border-width:2px;border-color:#d4f6f6 #5a9a9a #5a9a9a #d4f6f6;"></div>
<div style="left:1149px;top:133px;width:30px;height:30px;background:#9cd8d8;border-style:solid;border-width:1px;border-color:#1a2a2a #1a2a2a #1a2a2a #1a2a2a;"></div>
<div style="left:1150px;top:134px;width:28px;height:28px;background:#9cd8d8;border-style:solid;border-width:1px;border-color:#5a9a9a #d4f6f6 #d4f6f6 #5a9a9a;"></div>
<svg style="left:1150px;top:134px" width="28" height="28" viewBox="0 0 28 28"><rect x="13" y="8" width="11" height="13" stroke="#000" fill="none" stroke-width="2"/><path d="M4 19 H7 C11 19 11 11 7 11 H5" stroke="#000" fill="none" stroke-width="2.4"/><polygon points="1,11 7,6 7,16" fill="#000"/></svg>
<div style="left:1185px;top:129px;width:38px;height:38px;background:#9cd8d8;border-style:solid;border-width:2px;border-color:#d4f6f6 #5a9a9a #5a9a9a #d4f6f6;"></div>
<div style="left:1189px;top:133px;width:30px;height:30px;background:#9cd8d8;border-style:solid;border-width:1px;border-color:#1a2a2a #1a2a2a #1a2a2a #1a2a2a;"></div>
<div style="left:1190px;top:134px;width:28px;height:28px;background:#9cd8d8;border-style:solid;border-width:1px;border-color:#5a9a9a #d4f6f6 #d4f6f6 #5a9a9a;"></div>
<svg style="left:1190px;top:134px" width="28" height="28" viewBox="0 0 28 28"><path d="M25 8 H7 V14 H23 V20 H5" stroke="#000" fill="none" stroke-width="2"/><path d="M28 5 L25 8 L28 11 M1 17 L4.5 20 L1 23" stroke="#000" fill="none" stroke-width="1" shape-rendering="auto"/></svg>
<div style="left:1065px;top:169px;width:38px;height:38px;background:#9cd8d8;border-style:solid;border-width:2px;border-color:#d4f6f6 #5a9a9a #5a9a9a #d4f6f6;"></div>
<div style="left:1069px;top:173px;width:30px;height:30px;background:#9cd8d8;border-style:solid;border-width:1px;border-color:#1a2a2a #1a2a2a #1a2a2a #1a2a2a;"></div>
<div style="left:1070px;top:174px;width:28px;height:28px;background:#9cd8d8;border-style:solid;border-width:1px;border-color:#5a9a9a #d4f6f6 #d4f6f6 #5a9a9a;"></div>
<svg style="left:1070px;top:174px" width="28" height="28" viewBox="0 0 28 28"><rect x="7" y="7" width="14" height="14" stroke="#000" fill="none" stroke-width="2"/><polygon points="14,4.6 10.5,1.5 17.5,1.5" fill="#000"/><rect x="9.5" y="0" width="9" height="1.8" fill="#000"/><polygon points="14,23.4 10.5,26.5 17.5,26.5" fill="#000"/><rect x="9.5" y="26.2" width="9" height="1.8" fill="#000"/><polygon points="4.6,14 0,9.5 0,18.5" fill="#000"/><polygon points="23.4,14 28,9.5 28,18.5" fill="#000"/></svg>
<div style="left:1105px;top:169px;width:38px;height:38px;background:#9cd8d8;border-style:solid;border-width:2px;border-color:#d4f6f6 #5a9a9a #5a9a9a #d4f6f6;"></div>
<div style="left:1109px;top:173px;width:30px;height:30px;background:#9cd8d8;border-style:solid;border-width:1px;border-color:#1a2a2a #1a2a2a #1a2a2a #1a2a2a;"></div>
<div style="left:1110px;top:174px;width:28px;height:28px;background:#9cd8d8;border-style:solid;border-width:1px;border-color:#5a9a9a #d4f6f6 #d4f6f6 #5a9a9a;"></div>
<svg style="left:1110px;top:174px" width="28" height="28" viewBox="0 0 28 28"><rect x="10" y="10.5" width="8" height="8" stroke="#000" fill="none" stroke-width="2"/><polygon points="14,3.5 10,7.8 18,7.8" fill="#000"/><polygon points="14,25.5 10,21.2 18,21.2" fill="#000"/><polygon points="2.5,14.5 6.8,10 6.8,19" fill="#000"/><polygon points="25.5,14.5 21.2,10 21.2,19" fill="#000"/></svg>
<div style="left:1145px;top:169px;width:38px;height:38px;background:#9cd8d8;border-style:solid;border-width:2px;border-color:#d4f6f6 #5a9a9a #5a9a9a #d4f6f6;"></div>
<div style="left:1149px;top:173px;width:30px;height:30px;background:#9cd8d8;border-style:solid;border-width:1px;border-color:#1a2a2a #1a2a2a #1a2a2a #1a2a2a;"></div>
<div style="left:1150px;top:174px;width:28px;height:28px;background:#9cd8d8;border-style:solid;border-width:1px;border-color:#5a9a9a #d4f6f6 #d4f6f6 #5a9a9a;"></div>
<svg style="left:1150px;top:174px" width="28" height="28" viewBox="0 0 28 28"><text x="14.5" y="20" text-anchor="middle" font-size="16" font-family="Liberation Sans,sans-serif" font-weight="bold" letter-spacing="-0.9">1:2</text></svg>
<div style="left:1185px;top:169px;width:38px;height:38px;background:#9cd8d8;border-style:solid;border-width:2px;border-color:#d4f6f6 #5a9a9a #5a9a9a #d4f6f6;"></div>
<div style="left:1189px;top:173px;width:30px;height:30px;background:#9cd8d8;border-style:solid;border-width:1px;border-color:#1a2a2a #1a2a2a #1a2a2a #1a2a2a;"></div>
<div style="left:1190px;top:174px;width:28px;height:28px;background:#9cd8d8;border-style:solid;border-width:1px;border-color:#5a9a9a #d4f6f6 #d4f6f6 #5a9a9a;"></div>
<svg style="left:1190px;top:174px" width="28" height="28" viewBox="0 0 28 28"><rect x="3.2" y="3.4" width="21.6" height="21" stroke="#000" fill="none" stroke-width="2.4"/><text x="15.6" y="20.6" text-anchor="middle" font-size="16.5" font-family="Liberation Sans,sans-serif" font-weight="bold">?</text></svg>
<div style="left:1065px;top:209px;width:38px;height:38px;background:#9cd8d8;border-style:solid;border-width:2px;border-color:#d4f6f6 #5a9a9a #5a9a9a #d4f6f6;"></div>
<div style="left:1069px;top:213px;width:30px;height:30px;background:#9cd8d8;border-style:solid;border-width:1px;border-color:#1a2a2a #1a2a2a #1a2a2a #1a2a2a;"></div>
<div style="left:1070px;top:214px;width:28px;height:28px;background:#9cd8d8;border-style:solid;border-width:1px;border-color:#5a9a9a #d4f6f6 #d4f6f6 #5a9a9a;"></div>
<svg style="left:1070px;top:214px" width="28" height="28" viewBox="0 0 28 28"><path d="M2 5 H18" stroke="#000" stroke-width="2.4"/><path d="M22 2.5 h-2 a3.2 3.2 0 1 0 0 5.6 h2" stroke="#000" fill="none" stroke-width="2"/><path d="M2 12.5 h4 l2 -2 h14 v4 h-14 l-2 -2" stroke="#000" fill="none" stroke-width="1.2"/><path d="M11 19 c3 -3 10 -3 10 1 c0 4 -6 7 -10 6 c-3 -1 -3 -5 0 -7 z" stroke="#000" fill="none" stroke-width="1.2"/><circle cx="13" cy="22" r="1" stroke="#000" fill="none" stroke-width=".8"/><circle cx="16" cy="20" r="1" stroke="#000" fill="none" stroke-width=".8"/><circle cx="18" cy="22.5" r="1" stroke="#000" fill="none" stroke-width=".8"/></svg>
<div style="left:1105px;top:209px;width:38px;height:38px;background:#9cd8d8;border-style:solid;border-width:2px;border-color:#d4f6f6 #5a9a9a #5a9a9a #d4f6f6;"></div>
<div style="left:1109px;top:213px;width:30px;height:30px;background:#9cd8d8;border-style:solid;border-width:1px;border-color:#1a2a2a #1a2a2a #1a2a2a #1a2a2a;"></div>
<div style="left:1110px;top:214px;width:28px;height:28px;background:#9cd8d8;border-style:solid;border-width:1px;border-color:#5a9a9a #d4f6f6 #d4f6f6 #5a9a9a;"></div>
<svg style="left:1110px;top:214px" width="28" height="28" viewBox="0 0 28 28"><path d="M8.5 0 V28 M18.5 0 V28 M0 10.5 H28 M0 20.5 H28" stroke="#b4bcc0" stroke-width="1"/><path d="M10 14.7 H27" stroke="#e02020" stroke-width="5"/><circle cx="9" cy="14.7" r="6.8" fill="#e02020"/><path d="M10 14.7 H27" stroke="#000" stroke-width="3"/><circle cx="9" cy="14.7" r="5.7" fill="#000"/><path d="M1.5 26 L5 22.5 M5 22.5 h-3 M5 22.5 v3" stroke="#000" fill="none" stroke-width="1"/></svg>
<div style="left:1145px;top:209px;width:38px;height:38px;background:#b83030;border-style:solid;border-width:2px;border-color:#8a2020 #c84444 #c84444 #8a2020;"></div>
<div style="left:1149px;top:213px;width:30px;height:30px;background:#9cd8d8;border:1px solid #300;"></div>
<svg style="left:1150px;top:214px" width="28" height="28" viewBox="0 0 28 28"><path d="M3.5 0 V12 M3.6 12.5 H13.5 V27" fill="none" stroke="#e02020" stroke-width="1"/><path d="M11.5 3.5 V22.5 H5.5" fill="none" stroke="#1010e0" stroke-width="1.2"/><circle cx="11.3" cy="3.5" r="2.5" fill="#1010e0"/><circle cx="3.8" cy="12.2" r="2.5" fill="#f01010"/><circle cx="5.5" cy="22.4" r="2.8" fill="#1010e0"/><rect x="16.5" y="1.5" width="11" height="25" fill="#9cd8d8" stroke="#000"/><circle cx="21.5" cy="6.8" r="3.8" fill="#f01010"/><circle cx="21.5" cy="14.7" r="2.5" fill="#e8f8f8" stroke="#000" stroke-width="1"/><circle cx="21.5" cy="22.1" r="2.5" fill="#e8f8f8" stroke="#000" stroke-width="1"/></svg>
<div style="left:1185px;top:209px;width:38px;height:38px;background:#b83030;border-style:solid;border-width:2px;border-color:#8a2020 #c84444 #c84444 #8a2020;"></div>
<div style="left:1189px;top:213px;width:30px;height:30px;background:#9cd8d8;border:1px solid #300;"></div>
<svg style="left:1190px;top:214px" width="28" height="28" viewBox="0 0 28 28"><path d="M3.5 0 V12 M11.5 3.5 V22.5 H5.2" stroke="#000" fill="none" stroke-width="1.2"/><path d="M5.8 12.2 H11 M6.5 10 v2.2 M8.3 10 v2.2 M10.1 10 v2.2" stroke="#e02020" stroke-width="1"/><circle cx="11.3" cy="3.5" r="2.5" fill="#000"/><circle cx="3.2" cy="12.2" r="2.5" fill="#000"/><circle cx="5.2" cy="22.4" r="2.8" fill="#000"/><rect x="16.5" y="1.5" width="11" height="25" fill="#9cd8d8" stroke="#000"/><circle cx="21.5" cy="6.8" r="3.8" fill="#f01010"/><circle cx="21.5" cy="14.7" r="2.5" fill="#e8f8f8" stroke="#000" stroke-width="1"/><circle cx="21.5" cy="22.1" r="2.5" fill="#e8f8f8" stroke="#000" stroke-width="1"/></svg>
<div style="left:1065px;top:253px;width:38px;height:38px;background:#ffffff;border-style:solid;border-width:2px;border-color:#ffffff #8a8a8a #8a8a8a #ffffff;"></div>
<div style="left:1069px;top:257px;width:30px;height:30px;background:#ffffff;border-style:solid;border-width:1px;border-color:#1a2a2a #1a2a2a #1a2a2a #1a2a2a;"></div>
<div style="left:1070px;top:258px;width:28px;height:28px;background:#ffffff;border-style:solid;border-width:1px;border-color:#8a8a8a #ffffff #ffffff #8a8a8a;"></div>
<svg style="left:1070px;top:258px" width="28" height="28" viewBox="0 0 28 28"><rect x="0" y="0" width="28" height="28" fill="#000"/><rect x="6.5" y="8.5" width="15" height="15" fill="none" stroke="#fff" stroke-width="1.4"/><circle cx="14" cy="16" r="6" fill="#fff"/><path d="M18 10 L26 2 M26 2 h-5 M26 2 v5" stroke="#fff" stroke-width="2" fill="none"/></svg>
<div style="left:1105px;top:253px;width:38px;height:38px;background:#ffffff;border-style:solid;border-width:2px;border-color:#ffffff #8a8a8a #8a8a8a #ffffff;"></div>
<div style="left:1109px;top:257px;width:30px;height:30px;background:#ffffff;border-style:solid;border-width:1px;border-color:#1a2a2a #1a2a2a #1a2a2a #1a2a2a;"></div>
<div style="left:1110px;top:258px;width:28px;height:28px;background:#ffffff;border-style:solid;border-width:1px;border-color:#8a8a8a #ffffff #ffffff #8a8a8a;"></div>
<svg style="left:1110px;top:258px" width="28" height="28" viewBox="0 0 28 28"><rect x="13.5" y="3.5" width="12" height="12" fill="none" stroke="#e01010" stroke-width="2"/><rect x="3.5" y="19.5" width="6" height="6" fill="none" stroke="#1010d0" stroke-width="1.6"/><path d="M3 19 L13 3 M10 26 L26 16" stroke="#000" stroke-width="1" fill="none"/></svg>
<div style="left:1145px;top:253px;width:38px;height:38px;background:#ffffff;border-style:solid;border-width:2px;border-color:#ffffff #8a8a8a #8a8a8a #ffffff;"></div>
<div style="left:1149px;top:257px;width:30px;height:30px;background:#ffffff;border-style:solid;border-width:1px;border-color:#1a2a2a #1a2a2a #1a2a2a #1a2a2a;"></div>
<div style="left:1150px;top:258px;width:28px;height:28px;background:#ffffff;border-style:solid;border-width:1px;border-color:#8a8a8a #ffffff #ffffff #8a8a8a;"></div>
<svg style="left:1150px;top:258px" width="28" height="28" viewBox="0 0 28 28"><rect x="3" y="13" width="24" height="5" fill="#000"/><path d="M4 10 v3 M6.5 11 v2 M9 10 v3 M11.5 11 v2 M14 9 v4 M16.5 11 v2 M19 10 v3 M21.5 11 v2 M24 10 v3 M26.5 9.5 v3.5" stroke="#000" stroke-width="1.2"/></svg>
<div style="left:1185px;top:253px;width:38px;height:38px;background:#ffffff;border-style:solid;border-width:2px;border-color:#ffffff #8a8a8a #8a8a8a #ffffff;"></div>
<div style="left:1189px;top:257px;width:30px;height:30px;background:#ffffff;border-style:solid;border-width:1px;border-color:#1a2a2a #1a2a2a #1a2a2a #1a2a2a;"></div>
<div style="left:1190px;top:258px;width:28px;height:28px;background:#ffffff;border-style:solid;border-width:1px;border-color:#8a8a8a #ffffff #ffffff #8a8a8a;"></div>
<svg style="left:1190px;top:258px" width="28" height="28" viewBox="0 0 28 28"><rect x="3.5" y="3.5" width="21" height="21" fill="none" stroke="#000" stroke-width="1.2" stroke-dasharray="2 1.5"/><polygon points="10,7 18,7 22,11 22,18 18,22 10,22 6,18 6,11" fill="#000"/></svg>
<div style="left:1065px;top:293px;width:38px;height:38px;background:#d6d6d6;border-style:solid;border-width:2px;border-color:#ffffff #8a8a8a #8a8a8a #ffffff;"></div>
<div style="left:1069px;top:297px;width:30px;height:30px;background:#d6d6d6;border-style:solid;border-width:1px;border-color:#1a2a2a #1a2a2a #1a2a2a #1a2a2a;"></div>
<div style="left:1070px;top:298px;width:28px;height:28px;background:#d6d6d6;border-style:solid;border-width:1px;border-color:#8a8a8a #ffffff #ffffff #8a8a8a;"></div>
<svg style="left:1070px;top:298px" width="28" height="28" viewBox="0 0 28 28"><path d="M7 7 V22 H21" stroke="#1010f0" stroke-width="4" fill="none"/><circle cx="7" cy="7" r="4.5" fill="#1010f0"/><circle cx="7" cy="22" r="4.5" fill="#1010f0"/><circle cx="21" cy="22" r="4.5" fill="#1010f0"/><circle cx="22" cy="7" r="4.5" fill="#f01010"/></svg>
<div style="left:1105px;top:293px;width:38px;height:38px;background:#d6d6d6;border-style:solid;border-width:2px;border-color:#ffffff #8a8a8a #8a8a8a #ffffff;"></div>
<div style="left:1109px;top:297px;width:30px;height:30px;background:#d6d6d6;border-style:solid;border-width:1px;border-color:#1a2a2a #1a2a2a #1a2a2a #1a2a2a;"></div>
<div style="left:1110px;top:298px;width:28px;height:28px;background:#d6d6d6;border-style:solid;border-width:1px;border-color:#8a8a8a #ffffff #ffffff #8a8a8a;"></div>
<svg style="left:1110px;top:298px" width="28" height="28" viewBox="0 0 28 28"><rect x="10" y="11" width="8" height="8" fill="#1010d0"/><path d="M7 8 L21 22 M21 8 L7 22" stroke="#000" stroke-width="2"/></svg>
<div style="left:1145px;top:293px;width:38px;height:38px;background:#d6d6d6;border-style:solid;border-width:2px;border-color:#ffffff #8a8a8a #8a8a8a #ffffff;"></div>
<div style="left:1149px;top:297px;width:30px;height:30px;background:#d6d6d6;border-style:solid;border-width:1px;border-color:#1a2a2a #1a2a2a #1a2a2a #1a2a2a;"></div>
<div style="left:1150px;top:298px;width:28px;height:28px;background:#d6d6d6;border-style:solid;border-width:1px;border-color:#8a8a8a #ffffff #ffffff #8a8a8a;"></div>
<svg style="left:1150px;top:298px" width="28" height="28" viewBox="0 0 28 28"><circle cx="7" cy="22" r="3.4" fill="none" stroke="#1010f0" stroke-width="2"/><circle cx="22" cy="7" r="4.5" fill="#f01010"/><path d="M11 18 L17 12 M17 12 h-3 M17 12 v3" stroke="#000" fill="none"/></svg>
<div style="left:1185px;top:293px;width:38px;height:38px;background:#d6d6d6;border-style:solid;border-width:2px;border-color:#ffffff #8a8a8a #8a8a8a #ffffff;"></div>
<div style="left:1189px;top:297px;width:30px;height:30px;background:#d6d6d6;border-style:solid;border-width:1px;border-color:#1a2a2a #1a2a2a #1a2a2a #1a2a2a;"></div>
<div style="left:1190px;top:298px;width:28px;height:28px;background:#d6d6d6;border-style:solid;border-width:1px;border-color:#8a8a8a #ffffff #ffffff #8a8a8a;"></div>
<svg style="left:1190px;top:298px" width="28" height="28" viewBox="0 0 28 28"><circle cx="7" cy="22" r="4.5" fill="#1010f0"/><circle cx="22" cy="7" r="4.5" fill="#f01010"/><path d="M11 18 L17 12 M17 12 h-3 M17 12 v3" stroke="#000" fill="none"/></svg>
<div style="left:1065px;top:333px;width:38px;height:38px;background:#d6d6d6;border-style:solid;border-width:2px;border-color:#ffffff #8a8a8a #8a8a8a #ffffff;"></div>
<div style="left:1069px;top:337px;width:30px;height:30px;background:#d6d6d6;border-style:solid;border-width:1px;border-color:#1a2a2a #1a2a2a #1a2a2a #1a2a2a;"></div>
<div style="left:1070px;top:338px;width:28px;height:28px;background:#d6d6d6;border-style:solid;border-width:1px;border-color:#8a8a8a #ffffff #ffffff #8a8a8a;"></div>
<svg style="left:1070px;top:338px" width="28" height="28" viewBox="0 0 28 28"><path d="M5 21 L23 5" stroke="#f01010" stroke-width="2.6"/><path d="M6 24 H25" stroke="#1010f0" stroke-width="2.6"/><path d="M22 20 L19 17 M19 17 h3 M19 17 v3" stroke="#000" fill="none"/></svg>
<div style="left:1105px;top:333px;width:38px;height:38px;background:#d6d6d6;border-style:solid;border-width:2px;border-color:#ffffff #8a8a8a #8a8a8a #ffffff;"></div>
<div style="left:1109px;top:337px;width:30px;height:30px;background:#d6d6d6;border-style:solid;border-width:1px;border-color:#1a2a2a #1a2a2a #1a2a2a #1a2a2a;"></div>
<div style="left:1110px;top:338px;width:28px;height:28px;background:#d6d6d6;border-style:solid;border-width:1px;border-color:#8a8a8a #ffffff #ffffff #8a8a8a;"></div>
<svg style="left:1110px;top:338px" width="28" height="28" viewBox="0 0 28 28"><path d="M14 13 L23 5" stroke="#f01010" stroke-width="2.6"/><path d="M5 22 L14 13" stroke="#1010f0" stroke-width="2.6"/><path d="M16 22 L19 19 M19 19 h-3 M19 19 v3" stroke="#000" fill="none"/></svg>
<div style="left:1145px;top:333px;width:38px;height:38px;background:#d6d6d6;border-style:solid;border-width:2px;border-color:#ffffff #8a8a8a #8a8a8a #ffffff;"></div>
<div style="left:1149px;top:337px;width:30px;height:30px;background:#d6d6d6;border-style:solid;border-width:1px;border-color:#1a2a2a #1a2a2a #1a2a2a #1a2a2a;"></div>
<div style="left:1150px;top:338px;width:28px;height:28px;background:#d6d6d6;border-style:solid;border-width:1px;border-color:#8a8a8a #ffffff #ffffff #8a8a8a;"></div>
<svg style="left:1150px;top:338px" width="28" height="28" viewBox="0 0 28 28"><path d="M14 6 C22 6 22 20 12 20" stroke="#000" stroke-width="1.6" fill="none"/><polygon points="8,20 13,16.5 13,23.5" fill="#000"/></svg>
<div style="left:1185px;top:333px;width:38px;height:38px;background:#d6d6d6;border-style:solid;border-width:2px;border-color:#ffffff #8a8a8a #8a8a8a #ffffff;"></div>
<div style="left:1189px;top:337px;width:30px;height:30px;background:#d6d6d6;border-style:solid;border-width:1px;border-color:#1a2a2a #1a2a2a #1a2a2a #1a2a2a;"></div>
<div style="left:1190px;top:338px;width:28px;height:28px;background:#d6d6d6;border-style:solid;border-width:1px;border-color:#8a8a8a #ffffff #ffffff #8a8a8a;"></div>
<svg style="left:1190px;top:338px" width="28" height="28" viewBox="0 0 28 28"><path d="M14 5 V25" stroke="#000" stroke-width="1.2"/><path d="M2 7 H11 V23 M2 14 H11" stroke="#1010f0" stroke-width="2.2" fill="none"/><path d="M27 7 H18 V23 M27 14 H18" stroke="#f01010" stroke-width="2.2" fill="none"/></svg>
<div style="left:1065px;top:373px;width:38px;height:10px;background:#d6d6d6;border-style:solid;border-width:2px;border-color:#ececec #8a8a8a #8a8a8a #ececec;"></div>
<div style="left:1105px;top:373px;width:38px;height:10px;background:#d6d6d6;border-style:solid;border-width:2px;border-color:#ececec #8a8a8a #8a8a8a #ececec;"></div>
<div style="left:1145px;top:373px;width:38px;height:10px;background:#d6d6d6;border-style:solid;border-width:2px;border-color:#ececec #8a8a8a #8a8a8a #ececec;"></div>
<div style="left:1185px;top:373px;width:38px;height:10px;background:#d6d6d6;border-style:solid;border-width:2px;border-color:#ececec #8a8a8a #8a8a8a #ececec;"></div>
<div style="left:118px;top:486px;width:510px;height:370px;background:#000;border-radius:7px 7px 0 0;border:1px solid #707880;"></div>
<svg style="left:119px;top:487px" width="508" height="28" viewBox="119 487 508 28"><defs><filter id="bl" x="-20%" y="-200%" width="140%" height="500%"><feGaussianBlur stdDeviation="5"/></filter>
<clipPath id="tc"><rect x="119" y="487" width="508" height="28" rx="6"/></clipPath>
<linearGradient id="gl" x1="0" x2="1"><stop offset="0" stop-color="#fff" stop-opacity=".95"/><stop offset=".55" stop-color="#fff" stop-opacity=".8"/><stop offset="1" stop-color="#fff" stop-opacity="0"/></linearGradient></defs>
<g clip-path="url(#tc)"><rect x="118" y="486" width="510" height="30" fill="#0a0e0c"/>
<circle cx="506.5" cy="406" r="128.7" fill="#46ea6a" filter="url(#bl)"/>
<rect x="108" y="481" width="52" height="40" fill="#c8f0e6" filter="url(#bl)"/><ellipse cx="190" cy="500" rx="64" ry="11" fill="#fff" opacity=".62" filter="url(#bl)"/>
<rect x="118" y="486" width="510" height="1.6" fill="#fff" opacity=".6"/><rect x="125" y="512" width="496" height="1" fill="#fff" opacity=".5"/>
<linearGradient id="rg" x1="0" x2="1"><stop offset="0" stop-color="#3c3c40" stop-opacity="0"/><stop offset="1" stop-color="#3c3c40" stop-opacity="1"/></linearGradient><rect x="585" y="486" width="44" height="30" fill="url(#rg)"/>
</g></svg>
<div style="left:118px;top:514px;width:7px;height:340px;background:linear-gradient(90deg,#6a7c84,#a8d6f0 22%,#dcf0fb 48%,#94c8e8 72%,#bcdef0 90%,#667);"></div>
<div style="left:620px;top:514px;width:8px;height:340px;background:linear-gradient(90deg,#202828,#9aa6a8 20%,#ffffff 50%,#dfe8ea 70%,#50585c);"></div>
<div style="left:620px;top:506px;width:8px;height:262px;background:linear-gradient(90deg,#3a4444,#000 25%,#000 75%,#8a9494);"></div>
<div style="left:621px;top:506px;width:6px;height:50px;background:linear-gradient(#3a3a3e,rgba(58,58,62,0));"></div>
<div style="left:620px;top:768px;width:8px;height:10px;background:linear-gradient(rgba(0,0,0,1),rgba(0,0,0,0));"></div>
<div style="left:620px;top:606px;width:6px;height:14px;background:radial-gradient(ellipse at 40% 50%,#ff1020 30%,rgba(200,0,0,.6) 60%,rgba(0,0,0,0) 100%);"></div>
<div style="left:620px;top:648px;width:6px;height:14px;background:radial-gradient(ellipse at 40% 50%,#ff1020 30%,rgba(200,0,0,.6) 60%,rgba(0,0,0,0) 100%);"></div>
<div style="left:620px;top:680px;width:6px;height:16px;background:radial-gradient(ellipse at 40% 50%,#ff1020 30%,rgba(200,0,0,.6) 60%,rgba(0,0,0,0) 100%);"></div>
<div style="left:620px;top:749px;width:6px;height:14px;background:radial-gradient(ellipse at 40% 50%,#ff1020 30%,rgba(200,0,0,.6) 60%,rgba(0,0,0,0) 100%);"></div>
<div style="left:126px;top:494px;width:15px;height:13px;background:#fffff0;border:1px solid #333;border-top:3px solid #22228a;"></div>
<svg style="left:128px;top:497px" width="11" height="9"><path d="M1 1 L10 8 M10 1 L1 8" stroke="#c8c800" stroke-width="2.2" fill="none"/></svg>
<div style="left:146px;top:491px;width:200px;height:18px;font-family:'Liberation Sans',sans-serif;font-size:12.7px;color:#111;line-height:18px;">Results viewer</div>
<div style="left:574px;top:486px;width:48px;height:19px;border:1px solid #c8d0d0;border-top:none;border-radius:0 0 4px 4px;background:linear-gradient(rgba(255,255,255,.25),rgba(255,255,255,.05));"></div>
<div style="left:593px;top:485.5px;width:16px;height:16px;font-family:'Liberation Sans',sans-serif;font-weight:bold;font-size:17px;color:#fff;text-shadow:0 0 2px #000,0 0 2px #000;line-height:16px;">x</div>
<div style="left:124px;top:513px;width:498px;height:340px;background:#55ccaa;border:2px solid #000;border-right-width:1px;"></div>
<div class="rt" style="left:127px;top:516px;width:491px;height:26px;border-width:2px;"></div>
<div class="s" style="left:127px;top:519px;width:491px;height:20px;font-size:15px;line-height:20px;text-align:center;">Signal Layer Checks</div>
<div style="left:126px;top:542.5px;width:495px;height:3px;background:#000;"></div>
<div style="left:126px;top:545px;width:170px;height:29px;background:#55ccaa;border:1px solid #0a2a22;"></div>
<div class="rc" style="left:128px;top:547px;width:47px;height:25px;"></div>
<div class="m" style="left:132px;top:552.5px;width:40px;height:18px;font-size:15px;line-height:18px;font-weight:normal;font-style:italic;">None</div>
<div style="left:176px;top:546px;width:78px;height:27px;background:#9cd8d8;border-left:1px solid #0a2a22;border-right:1px solid #0a2a22;"></div>
<div class="m" style="left:188px;top:552.5px;width:70px;height:18px;font-size:15px;line-height:18px;font-style:italic;">Layers</div>
<div class="rc" style="left:256px;top:547px;width:38px;height:25px;"></div>
<div class="m" style="left:261px;top:552.5px;width:30px;height:18px;font-size:15px;line-height:18px;font-weight:normal;font-style:italic;">All</div>
<div style="left:297px;top:545px;width:323px;height:30px;background:#9cd8d8;border:1px solid #0a2a22;"></div>
<div class="rc" style="left:299px;top:547px;width:205px;height:26px;"></div>
<div class="m" style="left:299px;top:552.5px;width:205px;height:18px;font-size:15px;line-height:18px;font-style:italic;text-align:center;">Categories (16)</div>
<div class="m" style="left:506px;top:552.5px;width:60px;height:18px;font-size:15px;line-height:18px;">Meas:</div>
<div class="rc" style="left:558px;top:548px;width:59px;height:25px;"></div>
<div class="m" style="left:563px;top:552.5px;width:40px;height:18px;font-size:15px;line-height:18px;">All</div>
<div class="rc" style="left:599px;top:558px;width:12px;height:6px;border-width:1px;"></div>
<div class="st" style="left:127px;top:574px;width:150px;height:268px;border-width:2px 2px 2px 1px;"></div>
<div class="m" style="left:131px;top:579px;width:140px;height:18px;font-size:15px;line-height:18px;color:#000;">cs</div>
<div style="left:131px;top:597px;width:140px;height:15px;background:#000;"></div>
<div class="m" style="left:131px;top:597px;width:140px;height:18px;font-size:15px;line-height:18px;color:#fff;">sig3b</div>
<div style="left:131px;top:615px;width:140px;height:15px;background:#000;"></div>
<div class="m" style="left:131px;top:615px;width:140px;height:18px;font-size:15px;line-height:18px;color:#fff;">sig5b</div>
<div style="left:131px;top:633px;width:140px;height:15px;background:#000;"></div>
<div class="m" style="left:131px;top:633px;width:140px;height:18px;font-size:15px;line-height:18px;color:#fff;">sig7b</div>
<div style="left:131px;top:651px;width:140px;height:15px;background:#000;"></div>
<div class="m" style="left:131px;top:651px;width:140px;height:18px;font-size:15px;line-height:18px;color:#fff;">sig12t</div>
<div style="left:131px;top:669px;width:140px;height:15px;background:#000;"></div>
<div class="m" style="left:131px;top:669px;width:140px;height:18px;font-size:15px;line-height:18px;color:#fff;">sig14t</div>
<div class="m" style="left:131px;top:687px;width:140px;height:18px;font-size:15px;line-height:18px;color:#000;">ss</div>
<div style="left:281px;top:574px;width:14px;height:268px;background:#44b898;border-style:solid;border-width:2px;border-color:#2f7f6a #a8ecd8 #a8ecd8 #2f7f6a;"></div>
<svg style="left:283px;top:576px" width="10" height="13"><polygon points="5.0,0.5 9.5,12.5 0.5,12.5" fill="#55ccaa"/><path d="M5.0 0.5 L0.5 12.5" stroke="#a8ecd8" stroke-width="1.3"/><path d="M5.0 0.5 L9.5 12.5 L0.5 12.5" stroke="#2f7f6a" stroke-width="1.3" fill="none"/></svg>
<svg style="left:283px;top:827px" width="10" height="13"><polygon points="5.0,12.5 9.5,0.5 0.5,0.5" fill="#55ccaa"/><path d="M0.5 0.5 H9.5" stroke="#a8ecd8" stroke-width="1.3"/><path d="M0.5 0.5 L5.0 12.5" stroke="#a8ecd8" stroke-width="1.3"/><path d="M5.0 12.5 L9.5 0.5" stroke="#2f7f6a" stroke-width="1.3" fill="none"/></svg>
<div style="left:283px;top:590px;width:10px;height:235px;background:#55ccaa;border-style:solid;border-width:2px;border-color:#a8ecd8 #2f7f6a #2f7f6a #a8ecd8;"></div>
<div class="st" style="left:298px;top:576px;width:303px;height:204px;border-width:2px;"></div>
<div class="m" style="left:302px;top:580.5px;width:297px;height:18px;font-size:15px;line-height:18px;color:#000;">PTH to Copper (2586)</div>
<div class="m" style="left:302px;top:598.5px;width:297px;height:18px;font-size:15px;line-height:18px;color:#000;">VIA Annular ring (38)</div>
<div class="m" style="left:302px;top:616.5px;width:297px;height:18px;font-size:15px;line-height:18px;color:#000;">Missing Pad for VIA (15865)</div>
<div class="m" style="left:302px;top:634.5px;width:297px;height:18px;font-size:15px;line-height:18px;color:#000;">Missing Pad for PTH (206)</div>
<div class="m" style="left:302px;top:652.5px;width:297px;height:18px;font-size:15px;line-height:18px;color:#000;">Spacing length (199)</div>
<div class="m" style="left:302px;top:670.5px;width:297px;height:18px;font-size:15px;line-height:18px;color:#000;">Lines (11214)</div>
<div class="m" style="left:302px;top:688.5px;width:297px;height:18px;font-size:15px;line-height:18px;color:#000;">Non standard rotated lines (1355)</div>
<div style="left:302px;top:707.5px;width:293px;height:15px;background:#000;"></div>
<div class="m" style="left:302px;top:706.5px;width:297px;height:18px;font-size:15px;line-height:18px;color:#fff;">Slivers (187)</div>
<div class="m" style="left:302px;top:724.5px;width:297px;height:18px;font-size:15px;line-height:18px;color:#000;">Conductor width (28030)</div>
<div class="m" style="left:302px;top:742.5px;width:297px;height:18px;font-size:15px;line-height:18px;color:#000;">Pad to Cu Connection (1)</div>
<div style="left:604px;top:576px;width:14px;height:204px;background:#44b898;border-style:solid;border-width:2px;border-color:#2f7f6a #a8ecd8 #a8ecd8 #2f7f6a;"></div>
<svg style="left:606px;top:578px" width="10" height="13"><polygon points="5.0,0.5 9.5,12.5 0.5,12.5" fill="#55ccaa"/><path d="M5.0 0.5 L0.5 12.5" stroke="#a8ecd8" stroke-width="1.3"/><path d="M5.0 0.5 L9.5 12.5 L0.5 12.5" stroke="#2f7f6a" stroke-width="1.3" fill="none"/></svg>
<svg style="left:606px;top:765px" width="10" height="13"><polygon points="5.0,12.5 9.5,0.5 0.5,0.5" fill="#55ccaa"/><path d="M0.5 0.5 H9.5" stroke="#a8ecd8" stroke-width="1.3"/><path d="M0.5 0.5 L5.0 12.5" stroke="#a8ecd8" stroke-width="1.3"/><path d="M5.0 12.5 L9.5 0.5" stroke="#2f7f6a" stroke-width="1.3" fill="none"/></svg>
<div style="left:606px;top:645px;width:10px;height:110px;background:#55ccaa;border-style:solid;border-width:2px;border-color:#a8ecd8 #2f7f6a #2f7f6a #a8ecd8;"></div>
<div style="left:298px;top:784px;width:303px;height:13px;background:#44b898;border-style:solid;border-width:2px;border-color:#2f7f6a #a8ecd8 #a8ecd8 #2f7f6a;"></div>
<div style="left:313px;top:786px;width:271px;height:9px;background:#55ccaa;border-style:solid;border-width:2px;border-color:#a8ecd8 #2f7f6a #2f7f6a #a8ecd8;"></div>
<svg style="left:300px;top:786px" width="13" height="9"><polygon points="0.5,4.5 12,0.5 12,8.5" fill="#55ccaa" stroke="#2f7f6a" stroke-width="1"/><path d="M0.5 4.5 L12 0.5" stroke="#a8ecd8" stroke-width="1.2"/></svg>
<svg style="left:586px;top:786px" width="13" height="9"><polygon points="12.5,4.5 1,0.5 1,8.5" fill="#55ccaa" stroke="#2f7f6a" stroke-width="1"/><path d="M1 8.5 V0.5 L12.5 4.5" stroke="#a8ecd8" stroke-width="1.2" fill="none"/></svg>
<div class="rc" style="left:299px;top:800px;width:53px;height:23px;"></div>
<div class="m" style="left:299px;top:804px;width:53px;height:18px;font-size:15px;line-height:18px;text-align:center;">First</div>
<div class="rc" style="left:357px;top:800px;width:43px;height:23px;"></div>
<div class="m" style="left:357px;top:804px;width:43px;height:18px;font-size:15px;line-height:18px;text-align:center;">&lt;---</div>
<div class="rc" style="left:405px;top:800px;width:43px;height:23px;"></div>
<div class="m" style="left:405px;top:804px;width:43px;height:18px;font-size:15px;line-height:18px;text-align:center;">---&gt;</div>
<div class="rc" style="left:453px;top:800px;width:43px;height:23px;"></div>
<div class="m" style="left:453px;top:804px;width:43px;height:18px;font-size:15px;line-height:18px;text-align:center;">Last</div>
<div class="m" style="left:500px;top:804px;width:60px;height:18px;font-size:15px;line-height:18px;">Index:</div>
<div class="st" style="left:558px;top:800px;width:59px;height:23px;"></div>
<div class="m" style="left:564.5px;top:802px;width:50px;height:18px;font-size:15px;line-height:18px;">66478</div>
<div style="left:562px;top:803px;width:1px;height:16px;background:#000;"></div>
<div style="left:296px;top:825px;width:126px;height:30px;background:#55ccaa;border:2px solid #000;"></div>
<div class="rc" style="left:305px;top:828px;width:113px;height:26px;"></div>
<div class="m" style="left:310px;top:833.5px;width:100px;height:18px;font-size:15px;line-height:18px;">Auto Zoom</div>
<div class="rc" style="left:399px;top:838px;width:12px;height:6px;border-width:1px;"></div>
<div style="left:422px;top:825px;width:28px;height:30px;background:#9cd8d8;"></div>
<div class="m" style="left:423px;top:832.5px;width:30px;height:18px;font-size:15px;line-height:18px;">Sv:</div>
<div style="left:449px;top:825px;width:69px;height:30px;background:#ff2020;border-top:1px solid #200;"></div>
<div style="left:454px;top:828px;width:60px;height:30px;background:#ff2020;border-style:solid;border-width:2px;border-color:#ffa0a0 #901010 #901010 #ffa0a0;"></div>
<div class="m" style="left:466px;top:832.5px;width:30px;height:18px;font-size:15px;line-height:18px;font-weight:normal;color:#600;">!!</div>
<div style="left:496px;top:837px;width:12px;height:7px;background:#ff2020;border-style:solid;border-width:1px;border-color:#ffb0b0 #801010 #801010 #ffb0b0;"></div>
<div style="left:523px;top:831px;width:12px;height:12px;background:#9cd8d8;border-style:solid;border-width:2px;border-color:#4f8f8f #d2f4f4 #d2f4f4 #4f8f8f;"></div>
<svg style="left:524px;top:830px" width="12" height="13"><path d="M2 5 L4.5 11 L10 1" stroke="#c01050" stroke-width="2.8" fill="none"/></svg>
<div class="m" style="left:538px;top:831px;width:80px;height:18px;font-size:15px;line-height:18px;">Show All</div>
<div style="left:816px;top:377px;width:410px;height:480px;background:#000;border-radius:7px 0 0 0;border:1px solid #707880;"></div>
<svg style="left:817px;top:378px" width="402" height="28" viewBox="817 378 402 28"><defs>
<clipPath id="tc2"><rect x="817" y="378" width="420" height="40" rx="6"/></clipPath>
<linearGradient id="gl2" x1="0" x2="1"><stop offset="0" stop-color="#fff" stop-opacity=".95"/><stop offset=".55" stop-color="#fff" stop-opacity=".8"/><stop offset="1" stop-color="#fff" stop-opacity="0"/></linearGradient>
<linearGradient id="tb2" x1="0" x2="1"><stop offset="0" stop-color="#c8d8e8" stop-opacity="0"/><stop offset=".3" stop-color="#b0c4dc" stop-opacity=".9"/><stop offset="1" stop-color="#c8d4e8" stop-opacity=".95"/></linearGradient></defs>
<g clip-path="url(#tc2)"><rect x="816" y="377" width="410" height="30" fill="#0a0e0c"/>
<defs><filter id="bl2" x="-20%" y="-50%" width="140%" height="200%"><feGaussianBlur stdDeviation="2.5"/></filter></defs>
<g filter="url(#bl2)"><rect x="1064" y="373" width="170" height="36" fill="#b2bfd8"/>
<rect x="1066" y="377" width="36" height="30" fill="#c2cee3"/><rect x="1106" y="377" width="36" height="30" fill="#c2cee3"/><rect x="1146" y="377" width="36" height="30" fill="#c2cee3"/><rect x="1186" y="377" width="36" height="30" fill="#c2cee3"/>
<circle cx="1077" cy="397" r="5" fill="#4040d0"/><circle cx="1091" cy="384" r="5" fill="#e05060"/><rect x="1072" y="392" width="5" height="8" fill="#4040d0"/>
<rect x="1114" y="389" width="22" height="4" fill="#e04060"/><rect x="1112" y="392" width="10" height="3" fill="#5050e0"/>
<rect x="1153" y="390" width="20" height="4" fill="#7080e0"/>
<circle cx="1198" cy="392" r="6" fill="#5050d0"/><circle cx="1210" cy="386" r="4" fill="#6060d8"/></g>
<ellipse cx="892" cy="391" rx="74" ry="11" fill="#fff" opacity=".62" filter="url(#bl)"/>
<rect x="816" y="377" width="410" height="1.6" fill="#fff" opacity=".6"/><rect x="823" y="403.5" width="400" height="1" fill="#fff" opacity=".5"/>
</g></svg>
<div style="left:816px;top:405px;width:8px;height:460px;background:linear-gradient(90deg,#50585c,#dfe8ea 35%,#ffffff 55%,#9aa6a8 80%,#202828);"></div>
<div style="left:816px;top:405px;width:8px;height:370px;background:linear-gradient(90deg,#000,#222 50%,#000);"></div>
<div style="left:817px;top:430px;width:6px;height:110px;background:linear-gradient(rgba(255,255,255,0),rgba(200,200,200,.5) 50%,rgba(240,240,240,.95));"></div>
<div style="left:816px;top:755px;width:8px;height:100px;background:linear-gradient(90deg,#50585c,#dfe8ea 35%,#ffffff 55%,#9aa6a8 80%,#202828);"></div>
<div style="left:825px;top:384px;width:15px;height:13px;background:#fffff0;border:1px solid #333;border-top:3px solid #22228a;"></div>
<svg style="left:827px;top:387px" width="11" height="9"><path d="M1 1 L10 8 M10 1 L1 8" stroke="#c8c800" stroke-width="2.2" fill="none"/></svg>
<div style="left:844px;top:381px;width:200px;height:18px;font-family:'Liberation Sans',sans-serif;font-size:13px;color:#111;line-height:18px;">Results histogram</div>
<div style="left:823px;top:405px;width:400px;height:295px;background:#55ccaa;border:1px solid #123;"></div>
<div style="left:828px;top:410px;width:103px;height:288px;background:#9cd8d8;border:2px solid #0a1a1a;"></div>
<div style="left:828px;top:546px;width:103px;height:2px;background:#0a1a1a;"></div>
<svg style="left:833px;top:417px" width="16" height="16"><polygon points="8,2 14,8 8,14 2,8" fill="#9cd8d8"/><path d="M2 8 L8 2 L14 8" stroke="#e0ffff" stroke-width="1.6" fill="none"/><path d="M2 8 L8 14 L14 8" stroke="#4f8f8f" stroke-width="1.6" fill="none"/></svg>
<div class="m" style="left:852px;top:418.5px;width:80px;height:18px;font-size:15px;line-height:18px;">Count</div>
<svg style="left:833px;top:444px" width="16" height="16"><polygon points="8,2 14,8 8,14 2,8" fill="#9cd8d8"/><path d="M2 8 L8 2 L14 8" stroke="#e0ffff" stroke-width="1.6" fill="none"/><path d="M2 8 L8 14 L14 8" stroke="#4f8f8f" stroke-width="1.6" fill="none"/></svg>
<div class="m" style="left:852px;top:445.5px;width:80px;height:18px;font-size:15px;line-height:18px;">Average</div>
<svg style="left:833px;top:471px" width="16" height="16"><polygon points="8,2 14,8 8,14 2,8" fill="#9cd8d8"/><path d="M2 8 L8 2 L14 8" stroke="#e0ffff" stroke-width="1.6" fill="none"/><path d="M2 8 L8 14 L14 8" stroke="#4f8f8f" stroke-width="1.6" fill="none"/></svg>
<div class="m" style="left:852px;top:472.5px;width:80px;height:18px;font-size:15px;line-height:18px;">Sum</div>
<svg style="left:833px;top:498px" width="16" height="16"><polygon points="8,2 14,8 8,14 2,8" fill="#c01050"/><path d="M2 8 L8 2 L14 8" stroke="#4f8f8f" stroke-width="1.6" fill="none"/><path d="M2 8 L8 14 L14 8" stroke="#e0ffff" stroke-width="1.6" fill="none"/></svg>
<div class="m" style="left:852px;top:499.5px;width:80px;height:18px;font-size:15px;line-height:18px;">Min</div>
<svg style="left:833px;top:525px" width="16" height="16"><polygon points="8,2 14,8 8,14 2,8" fill="#9cd8d8"/><path d="M2 8 L8 2 L14 8" stroke="#e0ffff" stroke-width="1.6" fill="none"/><path d="M2 8 L8 14 L14 8" stroke="#4f8f8f" stroke-width="1.6" fill="none"/></svg>
<div class="m" style="left:852px;top:526.5px;width:80px;height:18px;font-size:15px;line-height:18px;">Max</div>
<div class="sc" style="left:830px;top:550px;width:82px;height:112px;"></div>
<div style="left:833px;top:553px;width:73px;height:15px;background:#000;"></div>
<div class="m" style="left:834px;top:553px;width:70px;height:18px;font-size:15px;line-height:18px;color:#fff;">Size</div>
<div style="left:914px;top:549px;width:14px;height:113px;background:#8cc8c8;border-style:solid;border-width:2px;border-color:#4f8f8f #d2f4f4 #d2f4f4 #4f8f8f;"></div>
<svg style="left:916px;top:551px" width="10" height="13"><polygon points="5.0,0.5 9.5,12.5 0.5,12.5" fill="#9cd8d8"/><path d="M5.0 0.5 L0.5 12.5" stroke="#d2f4f4" stroke-width="1.3"/><path d="M5.0 0.5 L9.5 12.5 L0.5 12.5" stroke="#4f8f8f" stroke-width="1.3" fill="none"/></svg>
<svg style="left:916px;top:647px" width="10" height="13"><polygon points="5.0,12.5 9.5,0.5 0.5,0.5" fill="#9cd8d8"/><path d="M0.5 0.5 H9.5" stroke="#d2f4f4" stroke-width="1.3"/><path d="M0.5 0.5 L5.0 12.5" stroke="#d2f4f4" stroke-width="1.3"/><path d="M5.0 12.5 L9.5 0.5" stroke="#4f8f8f" stroke-width="1.3" fill="none"/></svg>
<div style="left:916px;top:565px;width:10px;height:80px;background:#9cd8d8;border-style:solid;border-width:2px;border-color:#d2f4f4 #4f8f8f #4f8f8f #d2f4f4;"></div>
<div class="rc" style="left:830px;top:665px;width:30px;height:30px;"></div>
<div style="left:834px;top:669px;width:22px;height:22px;background:#9cd8d8;border:1px solid #000;"></div>
<div style="left:834px;top:669px;width:22px;height:12px;font-family:'Liberation Serif',serif;font-size:11px;line-height:12px;text-align:center;color:#000;letter-spacing:-0.3px;-webkit-text-stroke:0.3px #000;">DEL</div>
<svg style="left:840.5px;top:680px" width="9" height="9"><circle cx="4.5" cy="4.5" r="3.3" fill="#f01010" stroke="#400" stroke-width="0.6"/></svg>
<div class="rc" style="left:864px;top:665px;width:30px;height:30px;"></div>
<div style="left:868px;top:669px;width:22px;height:22px;background:#9cd8d8;border:1px solid #000;"></div>
<div style="left:868px;top:669px;width:22px;height:12px;font-family:'Liberation Serif',serif;font-size:11px;line-height:12px;text-align:center;color:#000;letter-spacing:-0.3px;-webkit-text-stroke:0.3px #000;">REF</div>
<svg style="left:874.5px;top:680px" width="9" height="9"><circle cx="4.5" cy="4.5" r="3.3" fill="#10e010" stroke="#400" stroke-width="0.6"/></svg>
<div style="left:931px;top:410px;width:300px;height:223px;background:#9cd8d8;border:2px solid #0a1a1a;"></div>
<div style="left:1006px;top:415px;width:208px;height:24px;background:#667a7a;"></div>
<div style="left:1006px;top:415px;width:206px;height:22px;background:#b4ffff;border:1px solid #111;"></div>
<div class="m" style="left:1010.5px;top:420px;width:200px;height:18px;font-size:14.8px;line-height:18px;font-style:italic;">Size(Size) / Min(Size)</div>
<div style="left:938px;top:560px;width:56px;height:16px;background:#ff1a1a;border:1px solid #500;border-bottom:none;"></div>
<div style="left:993px;top:453px;width:56px;height:123px;background:#ff1a1a;border:1px solid #500;border-bottom:none;"></div>
<div style="left:933px;top:576px;width:300px;height:4px;background:#000;"></div>
<div style="left:938px;top:581px;width:56px;height:29px;background:#ff1a1a;border:1px solid #500;"></div>
<div style="left:993px;top:581px;width:56px;height:29px;background:#ff1a1a;border:1px solid #500;"></div>
<div class="m" style="left:998px;top:437.5px;width:60px;height:18px;font-size:15px;line-height:18px;font-weight:normal;">3.411</div>
<div class="m" style="left:943px;top:545px;width:60px;height:18px;font-size:15px;line-height:18px;font-weight:normal;color:#e01010;">0.489</div>
<div class="m" style="left:938px;top:584.5px;width:56px;height:14px;font-size:13px;line-height:14px;text-align:center;color:#400;">0-</div>
<div class="m" style="left:938px;top:598.5px;width:66px;height:12px;font-size:13px;line-height:14px;text-align:center;color:#400;">1</div>
<div class="m" style="left:993px;top:584.5px;width:56px;height:14px;font-size:13px;line-height:14px;text-align:center;color:#400;">3-</div>
<div class="m" style="left:993px;top:598.5px;width:66px;height:12px;font-size:13px;line-height:14px;text-align:center;color:#400;">4</div>
<div style="left:933px;top:617px;width:300px;height:13px;background:#8cc8c8;border-style:solid;border-width:2px;border-color:#4f8f8f #d2f4f4 #d2f4f4 #4f8f8f;"></div>
<div style="left:948px;top:619px;width:290px;height:9px;background:#9cd8d8;border-style:solid;border-width:2px;border-color:#d2f4f4 #4f8f8f #4f8f8f #d2f4f4;"></div>
<svg style="left:935px;top:619px" width="13" height="9"><polygon points="0.5,4.5 12,0.5 12,8.5" fill="#9cd8d8" stroke="#4f8f8f" stroke-width="1"/><path d="M0.5 4.5 L12 0.5" stroke="#d2f4f4" stroke-width="1.2"/></svg>
<div style="left:933px;top:632px;width:300px;height:64px;background:#9cd8d8;border:2px solid #0a1a1a;border-top:none;"></div>
<div class="sc" style="left:935px;top:634px;width:86px;height:60px;"></div>
<div style="left:939px;top:638px;width:72px;height:15px;background:#000;"></div>
<div class="m" style="left:939px;top:638px;width:80px;height:18px;font-size:15px;line-height:18px;color:#fff;">Size</div>
<div class="m" style="left:939px;top:656px;width:82px;height:18px;font-size:15px;line-height:18px;">Feature1</div>
<div style="left:1021px;top:634px;width:13px;height:60px;background:#8cc8c8;border-style:solid;border-width:2px;border-color:#4f8f8f #d2f4f4 #d2f4f4 #4f8f8f;"></div>
<svg style="left:1023px;top:636px" width="9" height="13"><polygon points="4.5,0.5 8.5,12.5 0.5,12.5" fill="#9cd8d8"/><path d="M4.5 0.5 L0.5 12.5" stroke="#d2f4f4" stroke-width="1.3"/><path d="M4.5 0.5 L8.5 12.5 L0.5 12.5" stroke="#4f8f8f" stroke-width="1.3" fill="none"/></svg>
<svg style="left:1023px;top:679px" width="9" height="13"><polygon points="4.5,12.5 8.5,0.5 0.5,0.5" fill="#9cd8d8"/><path d="M0.5 0.5 H8.5" stroke="#d2f4f4" stroke-width="1.3"/><path d="M0.5 0.5 L4.5 12.5" stroke="#d2f4f4" stroke-width="1.3"/><path d="M4.5 12.5 L8.5 0.5" stroke="#4f8f8f" stroke-width="1.3" fill="none"/></svg>
<div style="left:1024px;top:649px;width:7px;height:30px;background:#9cd8d8;border-style:solid;border-width:1px;border-color:#d2f4f4 #4f8f8f #4f8f8f #d2f4f4;"></div>
<div class="rc" style="left:1035px;top:634px;width:200px;height:60px;border-width:2px;"></div>
<div class="m" style="left:1112px;top:636px;width:100px;height:18px;font-size:15px;line-height:18px;">Resolution</div>
<div class="m" style="left:1062px;top:659px;width:40px;height:18px;font-size:15px;line-height:18px;font-weight:normal;">1.0</div>
<div style="left:1038px;top:677px;width:200px;height:13px;background:#86baba;border-style:solid;border-width:2px;border-color:#4f8f8f #d2f4f4 #d2f4f4 #4f8f8f;"></div>
<div style="left:1060px;top:679px;width:29px;height:9px;background:#9cd8d8;border-style:solid;border-width:1px;border-color:#d2f4f4 #4f8f8f #4f8f8f #d2f4f4;"></div>
<div style="left:1074px;top:679px;width:1px;height:9px;background:#4f8f8f;"></div>
<div style="left:1075px;top:679px;width:1px;height:9px;background:#d2f4f4;"></div>
<div style="left:823px;top:697px;width:400px;height:4px;background:#55ccaa;border-top:1px solid #a8ecd8;border-bottom:1px solid #2f7f6a;"></div>
<div style="left:823px;top:701px;width:400px;height:150px;background:#55ccaa;"></div>
<div style="left:828px;top:707px;width:400px;height:150px;background:#55ccaa;border:2px solid #0a1a1a;"></div>
<div style="left:961px;top:728px;width:191px;height:130px;background:#9cd8d8;border:2px solid #000;"></div>
<div style="left:1054px;top:796px;width:3px;height:3px;background:#e010e0;"></div>
<div style="left:1054px;top:799px;width:2px;height:1px;background:#000;"></div>
</body></html>
